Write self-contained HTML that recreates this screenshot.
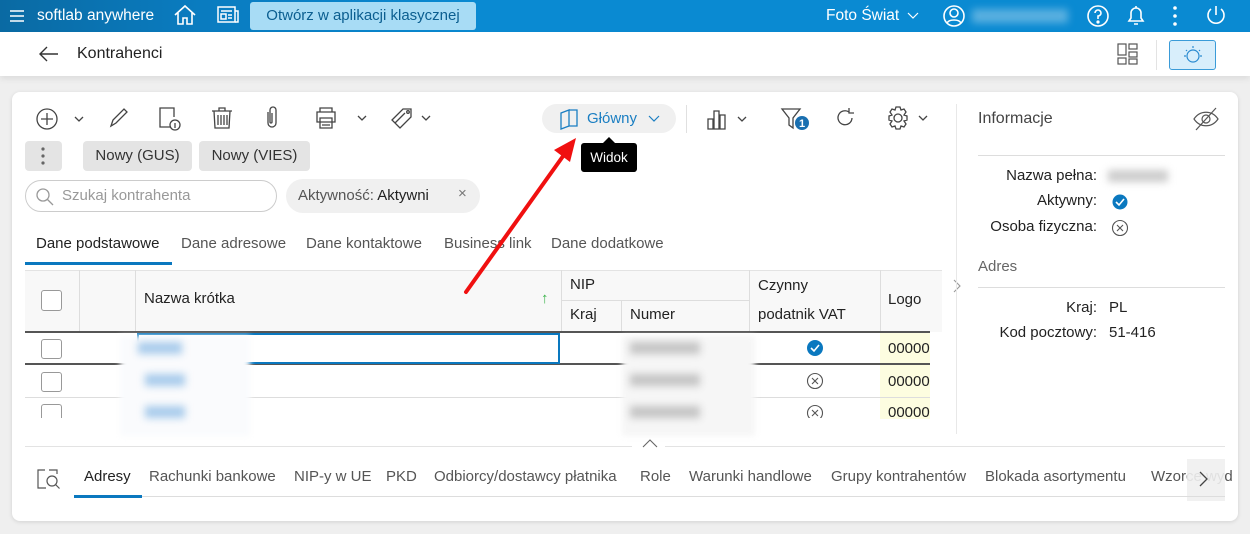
<!DOCTYPE html>
<html><head><meta charset="utf-8"><style>
*{box-sizing:border-box;margin:0;padding:0}
body{width:1250px;height:534px;overflow:hidden;background:#efefef;font-family:"Liberation Sans",sans-serif;font-size:15px;color:#222;position:relative}
.a{position:absolute;white-space:nowrap}
svg{position:absolute}
.top{position:absolute;left:0;top:0;width:1250px;height:32px;background:linear-gradient(90deg,#0a6aa3 0,#0a7cc0 200px,#0a8ad2 480px,#0a8ad2 100%)}
.w{color:#fff}
.g{color:#555}
.chip{position:absolute;background:#e4e4e4;border-radius:4px;height:30px;line-height:30px;text-align:center;color:#333}
.hdr{background:#f8f8f8}
.ln{position:absolute;background:#ddd}
</style></head><body>
<div class="top"></div>
<svg style="left:9px;top:8px" width="16" height="16" stroke="#fff" stroke-width="1.6"><path d="M1 3h14M1 8h14M1 13h14"/></svg>
<div class="a w" style="left:37px;top:7px;font-size:15.5px">softlab anywhere</div>
<svg style="left:173px;top:4px" width="24" height="22" fill="none" stroke="#fff" stroke-width="1.6"><path d="M2 11 12 2 22 11M5 9v11h5v-6h4v6h5V9"/></svg>
<svg style="left:217px;top:6px" width="22" height="18" fill="none" stroke="#fff" stroke-width="1.5"><rect x="1" y="1" width="17" height="15"/><path d="M4 5h11M4 8h5v5H4zM11 9h4M11 12h4M18 5h3v11H18"/></svg>
<div class="a" style="left:250px;top:2px;width:226px;height:28px;background:#a8dcf5;border-radius:3px;color:#0b5e90;font-size:15px;line-height:28px;text-align:center">Otwórz w aplikacji klasycznej</div>
<div class="a w" style="left:826px;top:7px;font-size:15.5px">Foto Świat</div>
<svg style="left:907px;top:12px" width="12" height="8" fill="none" stroke="#fff" stroke-width="1.2"><path d="M1 1l5 5 5-5"/></svg>
<svg style="left:942px;top:4px" width="24" height="24" fill="none" stroke="#fff" stroke-width="1.6"><circle cx="12" cy="12" r="10"/><circle cx="12" cy="9" r="4"/><path d="M5 19c2-4 12-4 14 0"/></svg>
<div class="a" style="left:972px;top:9px;width:96px;height:14px;background:#5ab0e0;filter:blur(4px)"></div>
<svg style="left:1086px;top:4px" width="24" height="24" fill="none" stroke="#fff" stroke-width="1.6"><circle cx="12" cy="12" r="10"/><path d="M9 9a3 3 0 1 1 3 3v3"/><circle cx="12" cy="18" r=".8" fill="#fff"/></svg>
<svg style="left:1124px;top:3px" width="24" height="24" fill="none" stroke="#fff" stroke-width="1.6"><path d="M5 18h14l-2-3V10a5 5 0 0 0-10 0v5zM10 21h4M12 3v2"/></svg>
<svg style="left:1170px;top:5px" width="10" height="22" fill="#fff"><circle cx="5" cy="3" r="1.8"/><circle cx="5" cy="11" r="1.8"/><circle cx="5" cy="19" r="1.8"/></svg>
<svg style="left:1204px;top:3px" width="24" height="24" fill="none" stroke="#fff" stroke-width="1.6"><path d="M12 3v9M7 6a8 8 0 1 0 10 0"/></svg>

<div class="a" style="left:0;top:32px;width:1250px;height:44px;background:#fff;box-shadow:0 3px 6px rgba(0,0,0,.08)"></div>
<svg style="left:38px;top:46px" width="22" height="16" fill="none" stroke="#333" stroke-width="1.4"><path d="M20 8H2M9 1L2 8l7 7"/></svg>
<div class="a" style="left:77px;top:45px;font-size:16px">Kontrahenci</div>
<svg style="left:1117px;top:43px" width="22" height="22" fill="none" stroke="#555" stroke-width="1.2"><rect x="1" y="1" width="8" height="11"/><rect x="12" y="1" width="8" height="5"/><rect x="1" y="15" width="8" height="6"/><rect x="12" y="9" width="8" height="5"/><rect x="12" y="16" width="8" height="5"/></svg>
<div class="ln" style="left:1156px;top:40px;width:1px;height:30px;background:#e3e3e3"></div>
<div class="a" style="left:1169px;top:40px;width:47px;height:30px;background:#d8eefb;border:1px solid #3a9bd8;border-radius:3px"></div>
<svg style="left:1181px;top:43px" width="24" height="24" fill="none" stroke="#2a8ad0" stroke-width="1.2"><circle cx="12" cy="13" r="6"/><path d="M12 3v2M5 7l1 1M19 7l-1 1M3 13h2M19 13h2"/></svg>

<div class="a" style="left:12px;top:92px;width:1226px;height:429px;background:#fff;border-radius:8px;box-shadow:0 1px 4px rgba(0,0,0,.12)"></div>
<svg style="left:35px;top:107px" width="80" height="24" fill="none" stroke="#444" stroke-width="1.3"><circle cx="12" cy="12" r="10"/><path d="M12 6v12M6 12h12M40 10l4 4 4-4"/></svg>
<svg style="left:107px;top:106px" width="24" height="24" fill="none" stroke="#444" stroke-width="1.3"><path d="M4 20l2-6L17 3l3 3L9 17zM4 20l5-3"/></svg>
<svg style="left:157px;top:106px" width="28" height="28" fill="none" stroke="#444" stroke-width="1.3"><path d="M14 21H3V2h14v9"/><circle cx="18" cy="19" r="5"/><path d="M18 17v5"/></svg>
<svg style="left:210px;top:106px" width="24" height="24" fill="none" stroke="#444" stroke-width="1.3"><path d="M2 5h20M9 5V2h6v3M4 5l1 17h14l1-17M8 9v10M11 9v10M14 9v10M17 9v10"/></svg>
<svg style="left:262px;top:106px" width="20" height="24" fill="none" stroke="#444" stroke-width="1.3"><path d="M6 6v11a4 4 0 0 0 8 0V4a3 3 0 0 0-6 0v12a1 1 0 0 0 2 0V7"/></svg>
<svg style="left:314px;top:106px" width="60" height="24" fill="none" stroke="#444" stroke-width="1.3"><path d="M6 6V2h12v4M3 6h18v10H3zM6 12h12v10H6zM8 16h8M8 19h8M44 10l4 4 4-4"/></svg>
<svg style="left:390px;top:106px" width="46" height="24" fill="none" stroke="#444" stroke-width="1.3"><path d="M2 14L13 3h8v8L10 22zM5 17l10-10"/><circle cx="18" cy="6" r="1.3"/><path d="M32 10l4 4 4-4"/></svg>
<div class="a" style="left:542px;top:104px;width:134px;height:29px;background:#f0f0f0;border-radius:15px"></div>
<svg style="left:558px;top:108px" width="24" height="22" fill="none" stroke="#1a7ec2" stroke-width="1.3"><path d="M3 5l8-3v16l-8 3zM11 2h8v16h-8M3 5v16"/></svg>
<div class="a" style="left:587px;top:110px;color:#1a7ec2;font-size:15px">Główny</div>
<svg style="left:647px;top:112px" width="14" height="12" fill="none" stroke="#1a7ec2" stroke-width="1.2"><path d="M2 4l5 5 5-5"/></svg>
<div class="ln" style="left:686px;top:105px;width:1px;height:28px;background:#e0e0e0"></div>
<svg style="left:706px;top:107px" width="46" height="24" fill="none" stroke="#444" stroke-width="1.3"><path d="M2 12h5v10H2zM8 4h5v18H8zM14 8h5v14h-5zM32 10l4 4 4-4"/></svg>
<svg style="left:780px;top:106px" width="34" height="26" fill="none" stroke="#444" stroke-width="1.3"><path d="M2 3h18l-7 9v10l-4-3v-7z"/><circle cx="22" cy="17" r="7" fill="#1a6fb0" stroke="none"/><text x="19" y="21" fill="#fff" font-size="11" font-weight="bold" font-family="Liberation Sans" stroke="none">1</text></svg>
<svg style="left:834px;top:107px" width="22" height="22" fill="none" stroke="#444" stroke-width="1.3"><path d="M18 11a7 7 0 1 1-3-6M15 1v5h5"/></svg>
<svg style="left:885px;top:105px" width="48" height="26" fill="none" stroke="#444" stroke-width="1.3"><circle cx="13" cy="13" r="4"/><path d="M11 2h4l1 3 3-1 2 3-2 3 3 1v4l-3 1 2 3-2 3-3-1-1 3h-4l-1-3-3 1-2-3 2-3-3-1v-4l3-1-2-3 2-3 3 1z"/><path d="M34 11l4 4 4-4"/></svg>

<div class="chip" style="left:25px;top:141px;width:37px"></div>
<svg style="left:39px;top:146px" width="8" height="20" fill="#666"><circle cx="4" cy="3" r="1.6"/><circle cx="4" cy="10" r="1.6"/><circle cx="4" cy="17" r="1.6"/></svg>
<div class="chip" style="left:83px;top:141px;width:109px">Nowy (GUS)</div>
<div class="chip" style="left:199px;top:141px;width:111px">Nowy (VIES)</div>

<div class="a" style="left:25px;top:180px;width:252px;height:32px;border:1px solid #ccc;border-radius:16px"></div>
<svg style="left:35px;top:187px" width="20" height="20" fill="none" stroke="#999" stroke-width="1.3"><circle cx="8" cy="8" r="6"/><path d="M12 12l6 6"/></svg>
<div class="a" style="left:62px;top:187px;color:#999">Szukaj kontrahenta</div>
<div class="a" style="left:286px;top:179px;width:194px;height:34px;background:#f0f0f0;border-radius:17px"></div>
<div class="a" style="left:298px;top:187px;color:#555">Aktywność: <span style="color:#222">Aktywni</span></div>
<div class="a" style="left:458px;top:185px;color:#777;font-size:15px">×</div>

<div class="a" style="left:581px;top:143px;width:56px;height:29px;background:#000;border-radius:3px;color:#fff;font-size:13.5px;line-height:29px;text-align:center">Widok</div>
<div class="a" style="left:603px;top:137px;width:0;height:0;border-left:6px solid transparent;border-right:6px solid transparent;border-bottom:6px solid #000"></div>

<div class="a" style="left:36px;top:235px">Dane podstawowe</div>
<div class="a g" style="left:181px;top:235px">Dane adresowe</div>
<div class="a g" style="left:306px;top:235px">Dane kontaktowe</div>
<div class="a g" style="left:444px;top:235px">Business link</div>
<div class="a g" style="left:551px;top:235px">Dane dodatkowe</div>
<div class="a" style="left:25px;top:262px;width:147px;height:3px;background:#0a78bf"></div>

<div class="a hdr" style="left:25px;top:270px;width:917px;height:62px;border-top:1px solid #e3e3e3"></div>
<div class="ln" style="left:79px;top:270px;width:1px;height:62px"></div>
<div class="ln" style="left:135px;top:270px;width:1px;height:62px"></div>
<div class="ln" style="left:561px;top:270px;width:1px;height:62px"></div>
<div class="ln" style="left:749px;top:270px;width:1px;height:62px"></div>
<div class="ln" style="left:880px;top:270px;width:1px;height:62px"></div>
<div class="ln" style="left:561px;top:300px;width:188px;height:1px"></div>
<div class="ln" style="left:621px;top:300px;width:1px;height:32px"></div>
<div class="a" style="left:41px;top:290px;width:21px;height:21px;border:1px solid #999;border-radius:3px;background:#fff"></div>
<div class="a" style="left:144px;top:290px">Nazwa krótka</div>
<div class="a" style="left:541px;top:290px;color:#3ab34a">↑</div>
<div class="a" style="left:570px;top:276px">NIP</div>
<div class="a" style="left:570px;top:306px">Kraj</div>
<div class="a" style="left:630px;top:306px">Numer</div>
<div class="a" style="left:758px;top:277px">Czynny</div>
<div class="a" style="left:758px;top:306px">podatnik VAT</div>
<div class="a" style="left:888px;top:291px">Logo</div>
<div class="a" style="left:25px;top:331px;width:905px;height:2px;background:#555"></div>
<div class="a" style="left:25px;top:363px;width:905px;height:2px;background:#555"></div>
<div class="ln" style="left:25px;top:397px;width:905px;height:1px"></div>
<div class="a" style="left:137px;top:333px;width:423px;height:31px;border:2px solid #0a78bf"></div>
<div class="a" style="left:41px;top:339px;width:21px;height:20px;border:1px solid #999;border-radius:3px"></div>
<div class="a" style="left:41px;top:372px;width:21px;height:20px;border:1px solid #999;border-radius:3px"></div>
<div class="a" style="left:41px;top:404px;width:21px;height:14px;border:1px solid #999;border-bottom:none;border-radius:3px 3px 0 0"></div>
<div class="a" style="left:120px;top:336px;width:130px;height:100px;background:#fafbfd;filter:blur(3px)"></div>
<div class="a" style="left:138px;top:342px;width:44px;height:12px;background:#a8cbeb;filter:blur(4px)"></div>
<div class="a" style="left:145px;top:374px;width:40px;height:12px;background:#a8cbeb;filter:blur(4px)"></div>
<div class="a" style="left:145px;top:406px;width:40px;height:12px;background:#a8cbeb;filter:blur(4px)"></div>
<div class="a" style="left:622px;top:336px;width:133px;height:100px;background:#f6f6f6;filter:blur(3px)"></div>
<div class="a" style="left:630px;top:342px;width:70px;height:12px;background:#c4c4c4;filter:blur(4px)"></div>
<div class="a" style="left:630px;top:374px;width:70px;height:12px;background:#c4c4c4;filter:blur(4px)"></div>
<div class="a" style="left:630px;top:406px;width:70px;height:12px;background:#c4c4c4;filter:blur(4px)"></div>
<svg style="left:806px;top:339px" width="18" height="18"><circle cx="9" cy="9" r="8" fill="#0a78bf"/><path d="M5 9l3 3 5-6" stroke="#fff" stroke-width="1.6" fill="none"/></svg>
<svg style="left:806px;top:372px" width="18" height="18" fill="none" stroke="#555" stroke-width="1.1"><circle cx="9" cy="9" r="7.5"/><path d="M6 6l6 6M12 6l-6 6"/></svg>
<svg style="left:806px;top:404px" width="18" height="14" fill="none" stroke="#555" stroke-width="1.1"><circle cx="9" cy="9" r="7.5"/><path d="M6 6l6 6M12 6l-6 6"/></svg>
<div class="a" style="left:880px;top:333px;width:50px;height:86px;background:#fdfde0"></div>
<div class="a" style="left:888px;top:340px">00000</div>
<div class="a" style="left:888px;top:373px">00000</div>
<div class="a" style="left:888px;top:404px">00000</div>
<div class="a" style="left:880px;top:363px;width:50px;height:2px;background:#555"></div>
<div class="ln" style="left:880px;top:397px;width:50px;height:1px"></div>
<svg style="left:952px;top:278px" width="10" height="16" fill="none" stroke="#999" stroke-width="1.1"><path d="M2 2l6 6-6 6"/></svg>
<div class="ln" style="left:956px;top:104px;width:1px;height:330px;background:#e8e8e8"></div>

<div class="ln" style="left:25px;top:446px;width:607px;height:1px;background:#e3e3e3"></div>
<div class="ln" style="left:665px;top:446px;width:560px;height:1px;background:#e3e3e3"></div>
<svg style="left:641px;top:438px" width="18" height="12" fill="none" stroke="#666" stroke-width="1.1"><path d="M2 9l7-7 7 7"/></svg>

<svg style="left:36px;top:466px" width="28" height="26" fill="none" stroke="#555" stroke-width="1.2"><path d="M10 22H2V4h7M13 4h8v4"/><circle cx="16" cy="15" r="5"/><path d="M19.5 18.5l4 4"/></svg>
<div class="a" style="left:84px;top:468px">Adresy</div>
<div class="a g" style="left:149px;top:468px">Rachunki bankowe</div>
<div class="a g" style="left:294px;top:468px">NIP-y w UE</div>
<div class="a g" style="left:386px;top:468px">PKD</div>
<div class="a g" style="left:434px;top:468px">Odbiorcy/dostawcy płatnika</div>
<div class="a g" style="left:640px;top:468px">Role</div>
<div class="a g" style="left:689px;top:468px">Warunki handlowe</div>
<div class="a g" style="left:831px;top:468px">Grupy kontrahentów</div>
<div class="a g" style="left:985px;top:468px">Blokada asortymentu</div>
<div class="a g" style="left:1151px;top:468px">Wzorce wyd</div>
<div class="a" style="left:1187px;top:459px;width:38px;height:42px;background:rgba(240,240,240,.9)"></div>
<svg style="left:1198px;top:470px" width="12" height="18" fill="none" stroke="#444" stroke-width="1.3"><path d="M2 2l7 7-7 7"/></svg>
<div class="a" style="left:74px;top:495px;width:68px;height:3px;background:#0a78bf"></div>
<div class="ln" style="left:142px;top:496px;width:1083px;height:1px"></div>

<div class="a" style="left:978px;top:110px;font-size:16px;color:#444">Informacje</div>
<svg style="left:1192px;top:106px" width="28" height="26" fill="none" stroke="#555" stroke-width="1.2"><path d="M2 13c6-9 18-9 24 0-6 9-18 9-24 0z"/><circle cx="14" cy="13" r="4"/><path d="M4 24L24 2"/></svg>
<div class="ln" style="left:978px;top:155px;width:247px;height:1px"></div>
<div class="a" style="left:978px;top:167px;width:119px;text-align:right">Nazwa pełna:</div>
<div class="a" style="left:1108px;top:170px;width:60px;height:12px;background:#ccc;filter:blur(4px)"></div>
<div class="a" style="left:978px;top:192px;width:119px;text-align:right">Aktywny:</div>
<svg style="left:1111px;top:193px" width="18" height="18"><circle cx="9" cy="9" r="7.5" fill="#0a78bf"/><path d="M5 9l3 3 5-6" stroke="#fff" stroke-width="1.6" fill="none"/></svg>
<div class="a" style="left:978px;top:218px;width:119px;text-align:right">Osoba fizyczna:</div>
<svg style="left:1111px;top:219px" width="18" height="18" fill="none" stroke="#555" stroke-width="1.1"><circle cx="9" cy="9" r="7.5"/><path d="M6 6l6 6M12 6l-6 6"/></svg>
<div class="a" style="left:978px;top:258px;color:#666">Adres</div>
<div class="ln" style="left:978px;top:287px;width:247px;height:1px"></div>
<div class="a" style="left:978px;top:299px;width:119px;text-align:right">Kraj:</div>
<div class="a" style="left:1109px;top:299px">PL</div>
<div class="a" style="left:958px;top:324px;width:139px;text-align:right">Kod pocztowy:</div>
<div class="a" style="left:1109px;top:324px">51-416</div>

<svg style="left:0;top:0" width="1250" height="534"><path d="M466 292 L566 152" stroke="#f01010" stroke-width="4" stroke-linecap="round"/><path d="M576 138 L554 150 L570 162 Z" fill="#f01010"/></svg>
</body></html>
